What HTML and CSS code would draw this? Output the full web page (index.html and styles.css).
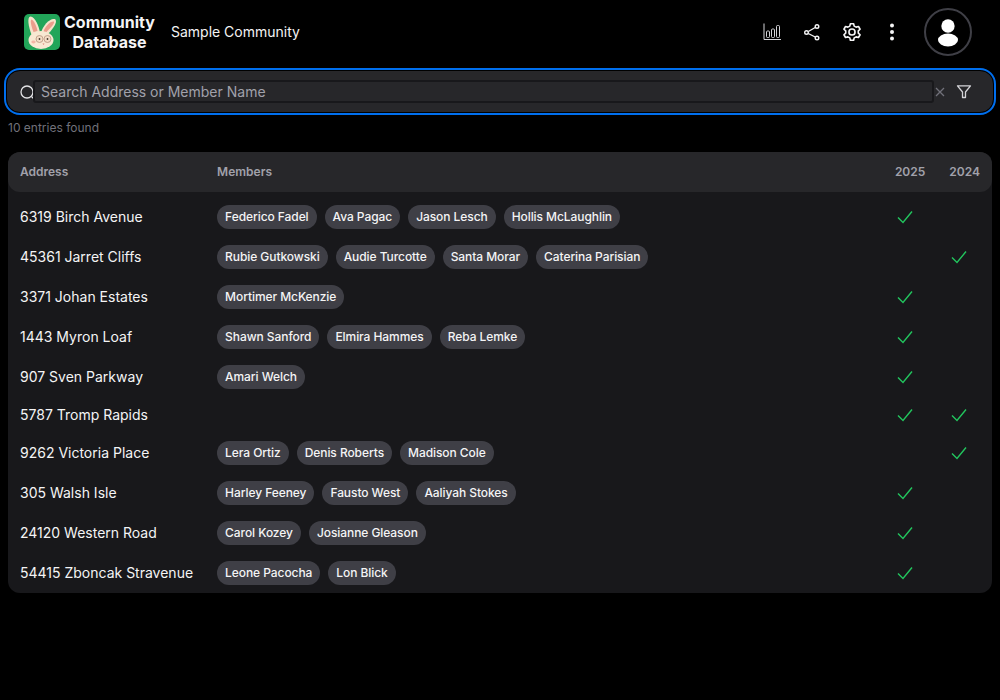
FILE: index.html
```html
<!DOCTYPE html>
<html lang="en">
<head>
    <meta charset="UTF-8">
    <title>Community Database</title>
    <link rel="stylesheet" href="styles.css">
</head>
<body>

<svg class="defs" width="0" height="0">
    <symbol id="check" viewBox="0 0 20 20">
        <path d="M3 10.5 L8 15.5 L17 4.5" fill="none" stroke="#22c55e" stroke-width="1.4"/>
    </symbol>
</svg>

<header class="topbar">
    <div class="brand">
        <svg class="logo" viewBox="0 0 36 36">
            <rect width="36" height="36" rx="5" fill="#22a559"/>
            <path d="M8 22 C4 12 3 3 6.500 2.500 C11 3 15 12 16 19 Z" fill="#f6e3cc"/>
            <path d="M9.500 18 C7 12 6 6 7.500 5.500 C10 6.500 12.500 12 13.500 17 Z" fill="#eb9d8c"/>
            <path d="M17 19 C19 11 27 3 31.500 5.500 C34 9 27 17 23 21 Z" fill="#f6e3cc"/>
            <path d="M19.500 17.500 C21 12 27 6.500 30 7.500 C31 10 25 15.500 22 18.500 Z" fill="#eb9d8c"/>
            <ellipse cx="17" cy="26" rx="12.500" ry="9" fill="#f8e8d2"/>
            <circle cx="15.500" cy="25" r="3.500" fill="#f3dcc6" stroke="#b8937c" stroke-width=".8"/>
            <circle cx="23.500" cy="25" r="3.500" fill="#f3dcc6" stroke="#b8937c" stroke-width=".8"/>
            <circle cx="15.500" cy="25" r=".9" fill="#4a3a30"/>
            <circle cx="23.500" cy="25" r=".9" fill="#4a3a30"/>
            <ellipse cx="9.500" cy="28" rx="2.200" ry="1.400" fill="#f2b5a5"/>
            <path d="M18.500 29.500 L20.500 29.500 L19.500 31 Z" fill="#d97f72"/>
        </svg>
        <div class="brandName">Community<br>Database</div>
        <div class="communityName">Sample Community</div>
    </div>
    <div class="actions">
        <svg class="icon" viewBox="0 0 20 20" fill="none" stroke="#d4d4d8" stroke-width="1">
            <path d="M2 1.500 V17.500 H19"/>
            <rect x="4.500" y="9" width="3" height="6.500" rx="1"/>
            <rect x="9.500" y="7" width="3" height="8.500" rx="1"/>
            <rect x="14.500" y="3.500" width="3" height="12" rx="1"/>
        </svg>
        <svg class="icon" viewBox="0 0 20 20" fill="none" stroke="#f4f4f5" stroke-width="1.400">
            <circle cx="15" cy="4.500" r="1.800"/>
            <circle cx="4.500" cy="10.500" r="1.800"/>
            <circle cx="15" cy="16" r="1.800"/>
            <path d="M6.300 9.500 L13.200 5.500 M6.300 11.500 L13.200 15"/>
        </svg>
        <svg class="icon" viewBox="1.500 1.500 21 21" fill="none" stroke="#f4f4f5" stroke-width="1.700">
            <path d="M10.300 3.300 h3.400 l.6 2.500 2 1.100 2.500-.7 1.700 2.900-1.900 1.800 v2.200 l1.900 1.800-1.700 2.900-2.500-.7-2 1.100-.6 2.500 h-3.400 l-.6-2.500-2-1.100-2.500.7-1.700-2.900 1.900-1.800 v-2.200 l-1.900-1.800 1.700-2.900 2.500.7 2-1.100 z" stroke-linejoin="round"/>
            <circle cx="12" cy="12" r="3.200"/>
        </svg>
        <svg class="icon" viewBox="0 0 20 20" fill="#f4f4f5">
            <circle cx="10" cy="3.500" r="2"/>
            <circle cx="10" cy="10" r="2"/>
            <circle cx="10" cy="16.500" r="2"/>
        </svg>
        <div class="avatar">
            <svg viewBox="0 0 24 24" width="32" height="32" fill="#fff">
                <circle cx="12" cy="7.500" r="5"/>
                <ellipse cx="12" cy="18" rx="7.500" ry="4.800"/>
            </svg>
        </div>
    </div>
</header>

<main class="content">
    <div class="searchBox">
        <svg class="searchIcon" viewBox="0 0 16 16" fill="none" stroke="#e4e4e7" stroke-width="1.300">
            <circle cx="8" cy="8" r="6"/>
            <path d="M12.500 12.500 L15 15"/>
        </svg>
        <input class="searchInput" type="text" placeholder="Search Address or Member Name">
        <svg class="clearIcon" viewBox="0 0 12 12" stroke="#71717a" stroke-width="1.300">
            <path d="M2 2 L10 10 M10 2 L2 10"/>
        </svg>
        <svg class="filterIcon" viewBox="0 0 16 16" fill="none" stroke="#d4d4d8" stroke-width="1.300" stroke-linejoin="round">
            <path d="M1.500 1.800 H14.500 L9.500 8 V13.500 H6.500 V8 Z"/>
        </svg>
    </div>
    <p class="entryCount">10 entries found</p>

    <table class="memberTable">
        <thead>
            <tr>
                <th class="addressCol">Address</th>
                <th>Members</th>
                <th class="yearCol">2025</th>
                <th class="yearCol">2024</th>
            </tr>
        </thead>
        <tbody>
            <tr>
                <td>6319 Birch Avenue</td>
                <td><span class="chip">Federico Fadel</span><span class="chip">Ava Pagac</span><span class="chip">Jason Lesch</span><span class="chip">Hollis McLaughlin</span></td>
                <td><svg class="check"><use href="#check"/></svg></td>
                <td></td>
            </tr>
            <tr>
                <td>45361 Jarret Cliffs</td>
                <td><span class="chip">Rubie Gutkowski</span><span class="chip">Audie Turcotte</span><span class="chip">Santa Morar</span><span class="chip">Caterina Parisian</span></td>
                <td></td>
                <td><svg class="check"><use href="#check"/></svg></td>
            </tr>
            <tr>
                <td>3371 Johan Estates</td>
                <td><span class="chip">Mortimer McKenzie</span></td>
                <td><svg class="check"><use href="#check"/></svg></td>
                <td></td>
            </tr>
            <tr>
                <td>1443 Myron Loaf</td>
                <td><span class="chip">Shawn Sanford</span><span class="chip">Elmira Hammes</span><span class="chip">Reba Lemke</span></td>
                <td><svg class="check"><use href="#check"/></svg></td>
                <td></td>
            </tr>
            <tr>
                <td>907 Sven Parkway</td>
                <td><span class="chip">Amari Welch</span></td>
                <td><svg class="check"><use href="#check"/></svg></td>
                <td></td>
            </tr>
            <tr>
                <td>5787 Tromp Rapids</td>
                <td></td>
                <td><svg class="check"><use href="#check"/></svg></td>
                <td><svg class="check"><use href="#check"/></svg></td>
            </tr>
            <tr>
                <td>9262 Victoria Place</td>
                <td><span class="chip">Lera Ortiz</span><span class="chip">Denis Roberts</span><span class="chip">Madison Cole</span></td>
                <td></td>
                <td><svg class="check"><use href="#check"/></svg></td>
            </tr>
            <tr>
                <td>305 Walsh Isle</td>
                <td><span class="chip">Harley Feeney</span><span class="chip">Fausto West</span><span class="chip">Aaliyah Stokes</span></td>
                <td><svg class="check"><use href="#check"/></svg></td>
                <td></td>
            </tr>
            <tr>
                <td>24120 Western Road</td>
                <td><span class="chip">Carol Kozey</span><span class="chip">Josianne Gleason</span></td>
                <td><svg class="check"><use href="#check"/></svg></td>
                <td></td>
            </tr>
            <tr>
                <td>54415 Zboncak Stravenue</td>
                <td><span class="chip">Leone Pacocha</span><span class="chip">Lon Blick</span></td>
                <td><svg class="check"><use href="#check"/></svg></td>
                <td></td>
            </tr>
        </tbody>
    </table>
</main>

</body>
</html>
```

FILE: styles.css
```css
body{
    margin: 0;
    background-color: #000;
    color: #f4f4f5;
    font-family: Inter, "Liberation Sans", sans-serif;
    font-size: 14px;
}
.defs{
    display: block;
    height: 0;
}
.topbar{
    display: flex;
    justify-content: space-between;
    align-items: center;
    height: 64px;
    padding: 0 28px 0 24px;
}
.brand{
    display: flex;
    align-items: center;
}
.logo{
    width: 36px;
    height: 36px;
}
.brandName{
    margin-left: 4px;
    font-size: 16px;
    font-weight: 700;
    line-height: 20px;
    text-align: center;
}
.communityName{
    margin-left: 16px;
    padding-bottom: 2px;
}
.actions{
    display: flex;
    align-items: center;
    gap: 20px;
}
.icon{
    width: 20px;
    height: 20px;
}
.avatar{
    display: flex;
    align-items: center;
    justify-content: center;
    width: 44px;
    height: 44px;
    margin-left: 2px;
    border: 2px solid #3f3f46;
    border-radius: 50%;
}
.content{
    padding: 0 8px;
}
.searchBox{
    display: flex;
    align-items: center;
    box-sizing: border-box;
    height: 43px;
    margin: 6px -2px 0;
    padding: 0 21px 0 12px;
    background-color: #27272a;
    border: 1px solid #000;
    border-radius: 14px;
    outline: 2px solid #006fee;
}
.searchIcon{
    flex: none;
    width: 16px;
    height: 16px;
    margin-right: -2px;
}
.searchInput{
    flex: 1;
    min-width: 0;
    height: 23px;
    box-sizing: border-box;
    padding: 0 6px;
    background-color: transparent;
    border: 2px solid #18181b;
    border-radius: 3px;
    color: #f4f4f5;
    font-family: inherit;
    font-size: 14px;
}
.searchInput::placeholder{
    color: #a1a1aa;
}
.clearIcon{
    flex: none;
    width: 12px;
    height: 12px;
    margin-right: 10px;
    margin-top: 1px;
}
.filterIcon{
    flex: none;
    width: 16px;
    height: 16px;
}
.entryCount{
    margin: 7px 0 16px;
    color: #71717a;
    font-size: 12px;
    line-height: 16px;
}
.memberTable{
    width: 100%;
    border-collapse: separate;
    border-spacing: 0;
    background-color: #18181b;
    border-radius: 12px;
}
th{
    height: 38px;
    padding: 0 12px 2px;
    background-color: #27272a;
    color: #a1a1aa;
    font-size: 12px;
    font-weight: 600;
    text-align: left;
    white-space: nowrap;
}
th:first-child{
    border-radius: 12px 0 0 12px;
}
th:last-child{
    border-radius: 0 12px 12px 0;
}
tbody::before{
    content: "";
    display: block;
    height: 5px;
}
td{
    height: 24px;
    padding: 6px 12px;
    line-height: 24px;
    white-space: nowrap;
}
.addressCol{
    width: 173px;
}
.yearCol{
    width: 30px;
}
.chip{
    display: inline-block;
    height: 24px;
    margin: 2px 8px 2px 0;
    padding: 0 8px;
    background-color: #3f3f46;
    border-radius: 12px;
    font-size: 12px;
    font-weight: 500;
    letter-spacing: -0.07px;
    line-height: 24px;
    vertical-align: top;
}
.check{
    display: block;
    width: 20px;
    height: 20px;
    margin: 2px 0;
}
```
